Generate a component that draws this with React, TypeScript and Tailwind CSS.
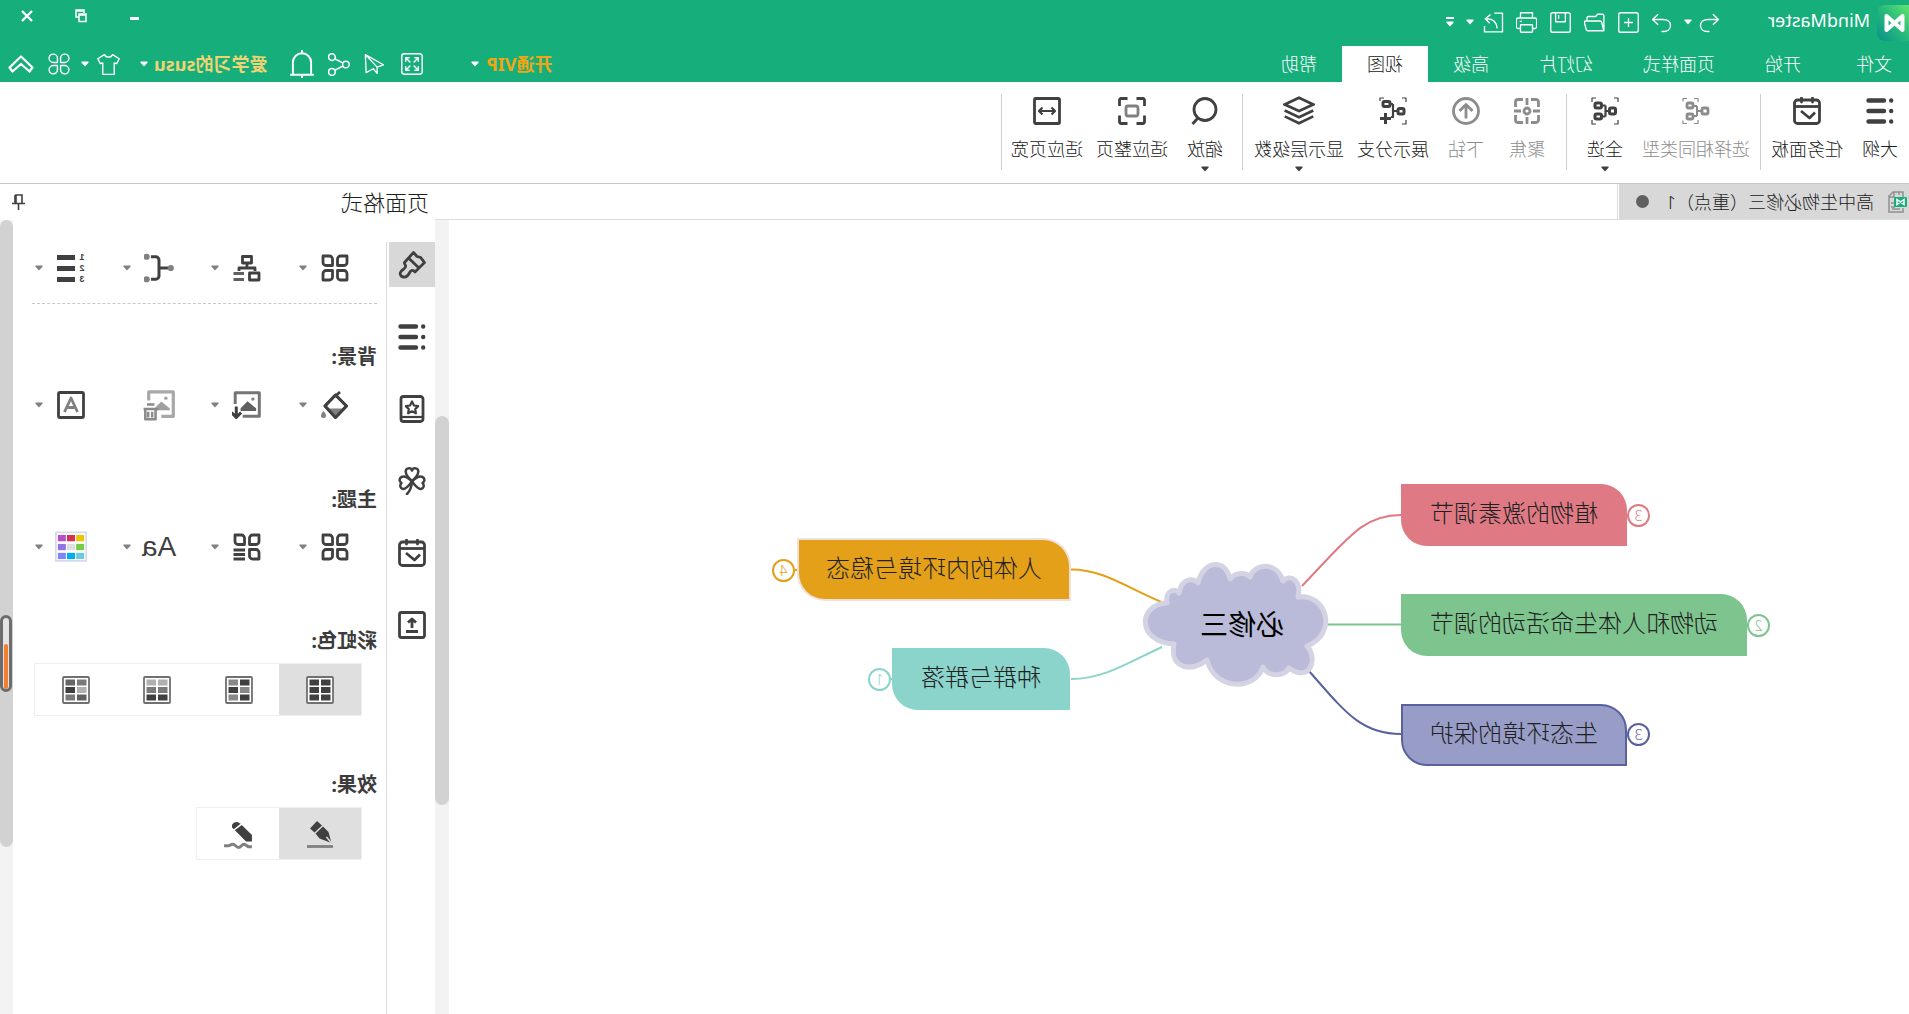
import React, { useState } from "react";

const Caret = ({ className = "text-white" }: { className?: string }) => (
  <svg className={`shrink-0 ${className}`} width="8" height="6" viewBox="0 0 8 6" fill="currentColor">
    <path d="M0.5 0.5h7v1.2L4 5.6 0.5 1.7z" />
  </svg>
);

type IconProps = { size?: number; stroke?: number; children: React.ReactNode };

// All the icons are drawn on a 28 x 28 grid
const Icon = ({ size = 28, stroke = 2.8, children }: IconProps) => (
  <svg
    className="shrink-0"
    width={size}
    height={size}
    viewBox="0 0 28 28"
    fill="none"
    stroke="currentColor"
    strokeWidth={stroke}
    strokeLinejoin="round"
  >
    {children}
  </svg>
);

const OutlineIcon = () => (
  <Icon stroke={4.4}>
    <path d="M10 3.5h15.5M10 14h15.5M10 24.5h15.5" strokeLinecap="round" />
    <path d="M2.8 3.5h.01M2.8 14h.01M2.8 24.5h.01" strokeLinecap="round" />
  </Icon>
);

const TaskIcon = () => (
  <Icon>
    <rect x="1.5" y="3" width="25" height="23.5" rx="3" />
    <path d="M1.5 9.5h25" />
    <path d="M8.5 1v4M19.5 1v4" strokeLinecap="round" />
    <path d="M6 15.5l5.500 5.500 8.500-7" />
  </Icon>
);

const SelectSameIcon = () => (
  <Icon>
    <path d="M12 1.5h4M27 4.5v-3h-4M12 26.5h4M27 23.5v3h-4M12 1v4M12 23v4" strokeWidth="1.2" />
    <rect x="2" y="11" width="6" height="6" rx="1.5" />
    <path d="M8 14h5M13 9v10M13 9h4M13 19h4" strokeWidth="2" />
    <rect x="17" y="6" width="6" height="5" rx="1.5" />
    <rect x="17" y="17" width="6" height="5" rx="1.5" />
  </Icon>
);

const SelectAllIcon = () => (
  <Icon stroke={3}>
    <path d="M1 5V1h4M23 1h4v4M27 23v4h-4M5 27H1v-4" strokeWidth="1.2" />
    <rect x="3.5" y="11" width="6" height="6" rx="1.5" />
    <path d="M9.5 14h4M13.5 8.5v11M13.5 8.5h4M13.5 19.5h4" strokeWidth="2.2" />
    <rect x="17.5" y="6" width="6.5" height="5" rx="1.5" />
    <rect x="17.5" y="17" width="6.5" height="5" rx="1.5" />
  </Icon>
);

const FocusIcon = () => (
  <Icon>
    <path d="M2.5 10V5A2.500 2.500 0 015 2.500h5M18 2.500h5A2.500 2.500 0 0125.500 5v5M25.500 18v5a2.500 2.500 0 01-2.500 2.500h-5M10 25.500H5A2.500 2.500 0 012.500 23v-5" />
    <path d="M14 1v7M14 20v7M1 14h7M20 14h7" />
    <circle cx="14" cy="14" r="3" />
  </Icon>
);

const DrillIcon = () => (
  <Icon>
    <circle cx="14" cy="14" r="12.500" />
    <path d="M14 21.500V8M7.500 14L14 7.500l6.500 6.500" />
  </Icon>
);

const BranchIcon = () => (
  <Icon stroke={3}>
    <path d="M1 5V1h4M23 1h4v3M5 27H1v-4" strokeWidth="1.2" />
    <rect x="3" y="11.500" width="6" height="5.500" rx="1.500" />
    <path d="M9 14h5M14 7v13h2M14 7h3" strokeWidth="2.2" />
    <rect x="17" y="4.500" width="7" height="5" rx="1.500" />
    <path d="M21.500 16v11M16 21.500h11" strokeWidth="3" />
  </Icon>
);

const LayersIcon = () => (
  <Icon size={32} stroke={2.4}>
    <path d="M14 2.500l12.500 5.800L14 14 1.500 8.300z" strokeLinejoin="miter" />
    <path d="M1.500 13.500L14 19.500l12.500-6M1.500 18.700L14 24.700l12.500-6" strokeLinejoin="miter" />
  </Icon>
);

const ZoomIcon = () => (
  <Icon>
    <circle cx="14" cy="12.500" r="11" />
    <path d="M21 21l5.500 6" />
  </Icon>
);

const FitPageIcon = () => (
  <Icon>
    <path d="M1.500 9V3a1.500 1.500 0 011.500-1.500h6.500M18.500 1.500H25A1.500 1.500 0 0126.500 3v6M26.500 18.500V25a1.500 1.500 0 01-1.500 1.500h-6.500M9.500 26.500H3A1.500 1.500 0 011.500 25v-6.500" />
    <rect x="8" y="9" width="12" height="10" rx="2" stroke="#808080" />
  </Icon>
);

const FitWidthIcon = () => (
  <Icon>
    <rect x="1.500" y="1.500" width="25" height="25" rx="1" />
    <path d="M6 14h16M9.500 10.500L6 14l3.500 3.500M18.500 10.500L22 14l-3.500 3.500" strokeWidth="2.200" />
  </Icon>
);

const GridIcon = () => (
  <Icon>
    <path d="M2 2h6.500a3 3 0 013 3v6.500H5a3 3 0 01-3-3z" />
    <path d="M26 2h-6.500a3 3 0 00-3 3v6.500H23a3 3 0 003-3z" />
    <path d="M2 26h6.500a3 3 0 003-3v-6.500H5a3 3 0 00-3 3z" />
    <path d="M26 26h-6.500a3 3 0 01-3-3v-6.500H23a3 3 0 013 3z" />
  </Icon>
);

const GridListIcon = () => (
  <Icon>
    <path d="M2 2h6.500a3 3 0 013 3v6.500H5a3 3 0 01-3-3z" />
    <path d="M26 2h-6.500a3 3 0 00-3 3v6.500H23a3 3 0 003-3z" />
    <path d="M2 26h6.500a3 3 0 003-3v-6.500H5a3 3 0 00-3 3z" />
    <path d="M16 17h11.500M16 21.500h11.500M16 26h11.500" />
  </Icon>
);

const LayoutIcon = () => (
  <Icon>
    <rect x="9.500" y="2.500" width="9" height="6.500" />
    <path d="M14 9v5M6 17v-3h16v3" />
    <rect x="2" y="19" width="9.500" height="7" />
    <path d="M17 19.500h10.500M17 25.500h10.500" stroke="#606060" />
  </Icon>
);

const ConnectorIcon = () => (
  <Icon size={30}>
    <path d="M5 14h9M21.500 3.500H17a3 3 0 00-3 3v15a3 3 0 003 3h4.500" />
    <g fill="#808080" stroke="none">
      <circle cx="3" cy="14" r="2.900" />
      <circle cx="25.500" cy="3.500" r="2.900" />
      <circle cx="25.500" cy="24.500" r="2.900" />
    </g>
  </Icon>
);

const NumberIcon = () => (
  <div className="flex h-8 items-center gap-1">
    <div className="flex flex-col font-['Liberation_Sans',sans-serif] text-[9px] leading-[11px] font-bold">
      <span>1</span>
      <span>2</span>
      <span>3</span>
    </div>
    <div className="flex flex-col gap-[6px]">
      <div className="h-[5px] w-[18px] bg-current" />
      <div className="h-[5px] w-[18px] bg-current" />
      <div className="h-[5px] w-[18px] bg-current" />
    </div>
  </div>
);

const FillIcon = () => (
  <Icon>
    <path d="M9 1l4 3.500M13.500 4L24 15 13.500 26.500 2.500 15z" />
    <path d="M4 17.500h19L13.500 26z" fill="#808080" stroke="none" />
    <path d="M13.500 4L24 15 13.500 26.500 2.500 15z" />
    <path d="M25.500 20c2 2.500 2.500 3.500 2.500 4.500a2.500 2.500 0 01-5 0c0-1 .5-2 2.500-4.500z" fill="#808080" stroke="none" />
  </Icon>
);

const ImageInIcon = () => (
  <Icon size={30}>
    <path d="M18 24.500H2.500v-22H25V13" stroke="#757575" />
    <path d="M5.500 19.500V17l8-6.500 6.500 6.500v2.500z" fill="#606060" stroke="none" />
    <circle cx="8.500" cy="8.500" r="1.600" fill="#808080" stroke="none" />
    <path d="M24 15.500v10M19.500 21l4.500 4.500 4.500-4.500" />
  </Icon>
);

const ImageDeleteIcon = () => (
  <Icon size={32}>
    <path d="M12 24H1.500V2.500H23V10" stroke="#a8a8a8" />
    <path d="M4.500 18.500V17l7.500-6 5 5v2.500z" fill="#a0a0a0" stroke="none" />
    <circle cx="8" cy="8" r="1.500" fill="#a0a0a0" stroke="none" />
    <path d="M14.500 17.500h13M18 13.500h6.500M17 18v8.500h9V18M20 20v5M23.500 20v5" stroke="#8a8a8a" strokeWidth="2.200" />
  </Icon>
);

const WatermarkIcon = () => (
  <Icon>
    <rect x="1.500" y="1.500" width="25" height="25" rx="1.500" />
    <path d="M7.500 21L14 7l6.500 14M10 16.500h8" stroke="#808080" />
  </Icon>
);

const paletteColors = [
  "#ecc400", "#d8304f", "#b94fc8",
  "#74cc48", "#dedede", "#9273e4",
  "#6fc8e0", "#00aef0", "#7a86fa",
];

const PaletteIcon = () => (
  <Icon size={32}>
    <rect x="0.700" y="1.200" width="26.600" height="25" stroke="#d5daea" strokeWidth="1.500" />
    {paletteColors.map((c, i) => (
      <rect
        key={c}
        x={2.5 + (i % 3) * 8}
        y={3.5 + Math.floor(i / 3) * 7.8}
        width="7"
        height="5.500"
        fill={c}
        stroke="none"
      />
    ))}
  </Icon>
);

const RainbowIcon = ({ cells }: { cells: string[] }) => (
  <Icon>
    <rect x="1" y="1" width="26" height="26" rx="1" fill="white" stroke="#707070" strokeWidth="1.800" />
    {cells.map((c, i) => (
      <rect
        key={i}
        x={3.5 + (i % 2) * 11.5}
        y={3.5 + Math.floor(i / 2) * 7.5}
        width="9.500"
        height="6"
        fill={c}
        stroke="none"
      />
    ))}
  </Icon>
);

const PenIcon = () => (
  <Icon>
    <path d="M1 26.500h26" stroke="#808080" strokeWidth="2.800" />
    <path d="M17 1l7 7.500-4.500 4L12 5.500z" fill="currentColor" stroke="none" />
    <path d="M11 6.500l7.500 7-4 5L2.500 23l3-11z" fill="currentColor" stroke="none" />
    <path d="M2.500 23l5-6" stroke="#dfdfdf" strokeWidth="1.500" />
  </Icon>
);

const PencilIcon = () => (
  <Icon size={30}>
    <path d="M1 26h3l4-2.500c3 0 3 3 5.500 3s3-3 5.500-3 2 1.500 4 1.500h4" stroke="#808080" />
    <path d="M12.500 4a4.200 4.200 0 017 4L18 9.500 11.500 4.500z" fill="currentColor" stroke="none" />
    <path d="M10.500 5.500l6.500 5L6.500 21H1v-6z" fill="currentColor" stroke="none" />
  </Icon>
);

const BrushIcon = () => (
  <Icon>
    <path d="M12.500 1.500L9 5.500l-3.500.8-4 5.200L11 21c2-2.500 4-2 5 0 1.500 3 3 5.500 6 5a3.400 3.400 0 003-5.500c-1.500-2.500-5.500-3-4.500-6 .5-1.500 1.500-2 1-3z" />
    <path d="M17.500 7L7 17" />
  </Icon>
);

const StarBookIcon = () => (
  <Icon>
    <rect x="3" y="1.500" width="22" height="25" rx="2.500" />
    <path d="M3 22h22" strokeWidth="2.200" />
    <path d="M14 6.500l2 4 4.200.6-3 3 .7 4.200-3.900-2-3.900 2 .7-4.200-3-3 4.200-.6z" strokeWidth="2.200" />
  </Icon>
);

const CloverIcon = () => (
  <Icon stroke={2.5}>
    <path d="M14 14C10 10.500 7.800 8 7.800 5A3.200 3.200 0 0114 3.500 3.200 3.200 0 0120.200 5c0 3-2.200 5.500-6.200 9z" />
    <path d="M14 14.500C11 18.500 8 22.500 5 22a3.400 3.400 0 01-1.500-6 3.300 3.300 0 010-6C7 8.500 11 11.500 14 14.500z" />
    <path d="M14 14.500c3 4 6 8 9 7.500a3.400 3.400 0 001.500-6 3.300 3.300 0 000-6C21 8.500 17 11.500 14 14.500z" />
    <path d="M14 15c.5 6 2 9 5 12" strokeLinecap="round" />
  </Icon>
);

const ExportIcon = () => (
  <Icon>
    <rect x="1.500" y="1.500" width="25" height="25" rx="2" />
    <path d="M8 20.500h12M14 17V9M10 11.500L14 8l4 3.500" />
  </Icon>
);

const quickTools: { label: string; width: string; icon: React.ReactNode }[] = [
  { label: "撤销", width: "w-6", icon: <path d="M9.500 3L2 10l7.500 7M2 10h14c6 0 10 3 10 8s-4 8-9 8h-3" /> },
  { label: "撤销菜单", width: "w-5", icon: null },
  { label: "恢复", width: "w-8", icon: <path d="M18.500 3L26 10l-7.500 7M26 10H12C6 10 2 13 2 18s4 8 9 8h3" /> },
  {
    label: "新建",
    width: "w-[34px]",
    icon: (
      <>
        <rect x="1" y="1" width="26" height="26" rx="2.500" />
        <path d="M14 8v12M8 14h12" />
      </>
    ),
  },
  {
    label: "打开",
    width: "w-[34px]",
    icon: <path d="M1.500 25V5a2 2 0 012-2H10l2.500 3H22a2 2 0 012 2v4M1.500 25l3-11.500c.3-1 1-1.500 2-1.500H26a1.500 1.500 0 011.500 2L25 23.500c-.3 1-1 1.500-2 1.500z" />,
  },
  {
    label: "保存",
    width: "w-[34px]",
    icon: (
      <>
        <path d="M1 3.500A2.500 2.500 0 013.500 1h21A2.500 2.500 0 0127 3.500v21a2.500 2.500 0 01-2.500 2.500h-21A2.500 2.500 0 011 24.500z" />
        <path d="M7.500 1v12h13V1M16.500 4v5" />
      </>
    ),
  },
  {
    label: "打印",
    width: "w-[34px]",
    icon: (
      <>
        <path d="M6 8V1h16v7M6 22H3a2.500 2.500 0 01-2.500-2.500v-9A2.500 2.500 0 013 8h22a2.500 2.500 0 012.500 2.500v9A2.500 2.500 0 0125 22h-3" />
        <rect x="6" y="17" width="16" height="10" rx="1" />
        <path d="M20 12.500h3" />
      </>
    ),
  },
  { label: "导出", width: "w-8", icon: <path d="M13 1.500H2v25h24v-8M9 22c1-9 5-13 14-13M18 3.500L25 9l-6 6" /> },
];

const tabs = ["文件", "开始", "页面样式", "幻灯片", "高级", "视图", "帮助"];

type Tool = { label: string; icon: React.ReactNode; disabled?: boolean; menu?: boolean };

const toolGroups: { className: string; tools: Tool[] }[] = [
  {
    className: "pr-[5px]",
    tools: [
      { label: "大纲", icon: <OutlineIcon /> },
      { label: "任务面板", icon: <TaskIcon /> },
    ],
  },
  {
    className: "pl-[5px] pr-[9px]",
    tools: [
      { label: "选择相同类型", icon: <SelectSameIcon />, disabled: true },
      { label: "全选", icon: <SelectAllIcon />, menu: true },
    ],
  },
  {
    className: "pl-[10px] pr-[6px]",
    tools: [
      { label: "聚焦", icon: <FocusIcon />, disabled: true },
      { label: "下钻", icon: <DrillIcon />, disabled: true },
      { label: "展示分支", icon: <BranchIcon /> },
      { label: "显示层级数", icon: <LayersIcon />, menu: true },
    ],
  },
  {
    className: "pl-[8px] pr-[4px]",
    tools: [
      { label: "缩放", icon: <ZoomIcon />, menu: true },
      { label: "适应整页", icon: <FitPageIcon /> },
      { label: "适应页宽", icon: <FitWidthIcon /> },
    ],
  },
];

const topics = [
  { text: "植物的激素调节", box: "left-[282px] top-[264px] w-[226px] h-[62px] bg-[#df7a85]" },
  { text: "动物和人体生命活动的调节", box: "left-[162px] top-[374px] w-[346px] h-[62px] bg-[#7ec48e]" },
  { text: "生态环境的保护", box: "left-[282px] top-[484px] w-[226px] h-[62px] bg-[#989dc8] border-2 border-[#5a619f]" },
  { text: "人体的内环境与稳态", box: "left-[840px] top-[320px] w-[270px] h-[59px] bg-[#e3a018] ring-2 ring-[#efe0dc]" },
  { text: "种群与群落", box: "left-[839px] top-[428px] w-[178px] h-[62px] bg-[#8bd4cb]" },
];

const counts = [
  { n: 3, pos: "left-[259px] top-[284px] border-[#df7a85] text-[#df7a85]" },
  { n: 2, pos: "left-[139px] top-[394px] border-[#7ec48e] text-[#7ec48e]" },
  { n: 3, pos: "left-[259px] top-[503px] border-[#5a619f] text-[#5a619f]" },
  { n: 4, pos: "left-[1114px] top-[339px] border-[#e3a018] text-[#e3a018]" },
  { n: 1, pos: "left-[1018px] top-[448px] border-[#8bd4cb] text-[#8bd4cb]" },
];

const sideTools = [
  { label: "页面格式", icon: <BrushIcon /> },
  { label: "大纲面板", icon: <OutlineIcon /> },
  { label: "图标", icon: <StarBookIcon /> },
  { label: "剪贴画", icon: <CloverIcon /> },
  { label: "任务", icon: <TaskIcon /> },
  { label: "导出面板", icon: <ExportIcon /> },
];

const layoutTools = [
  { label: "主题样式", icon: <GridIcon />, menu: true },
  { label: "布局", icon: <LayoutIcon />, menu: true },
  { label: "连接线", icon: <ConnectorIcon />, menu: true },
  { label: "编号", icon: <NumberIcon />, menu: true },
];

const backgroundTools = [
  { label: "填充", icon: <FillIcon />, menu: true },
  { label: "插入图片", icon: <ImageInIcon />, menu: true },
  { label: "移除图片", icon: <ImageDeleteIcon />, menu: false },
  { label: "水印", icon: <WatermarkIcon />, menu: true },
];

const themeTools = [
  { label: "主题", icon: <GridIcon />, menu: true },
  { label: "主题列表", icon: <GridListIcon />, menu: true },
  {
    label: "字体",
    icon: <span className="font-['Liberation_Sans',sans-serif] text-[28px] leading-8 font-medium">Aa</span>,
    menu: true,
  },
  { label: "主题颜色", icon: <PaletteIcon />, menu: true },
];

const rainbows = [
  ["#404040", "#404040", "#404040", "#404040", "#404040", "#404040"],
  ["#404040", "#888888", "#888888", "#404040", "#404040", "#888888"],
  ["#b0b0b0", "#b0b0b0", "#7a7a7a", "#7a7a7a", "#404040", "#404040"],
  ["#7a7a7a", "#666666", "#b0b0b0", "#404040", "#606060", "#7a7a7a"],
];

const ToolRow = ({ tools }: { tools: { label: string; icon: React.ReactNode; menu: boolean }[] }) => (
  <div className="flex pl-[26px]">
    {tools.map((tool) => (
      <button
        key={tool.label}
        aria-label={tool.label}
        className="flex h-8 w-[88px] shrink-0 items-center gap-3 last:w-auto"
      >
        <span className="flex w-8 justify-center">{tool.icon}</span>
        {tool.menu && <Caret className="text-[#808080]" />}
      </button>
    ))}
  </div>
);

const TitleBar = () => (
  <div className="flex h-[46px] items-start">
    <svg className="mt-[5px]" width="32" height="36" viewBox="0 0 32 36">
      <defs>
        <linearGradient id="logo" x1="0" y1="0" x2="1" y2="1">
          <stop offset="0" stopColor="#5fe36f" />
          <stop offset="0.5" stopColor="#25b97c" />
          <stop offset="1" stopColor="#0c8f8c" />
        </linearGradient>
      </defs>
      <path d="M0 0h24a8 8 0 018 8v20a8 8 0 01-8 8H0z" fill="url(#logo)" />
      <path d="M6.500 25V11l16 14V11L6.500 25z" fill="none" stroke="white" strokeWidth="4" strokeLinejoin="round" />
    </svg>
    <span className="ml-[7px] mt-[6px] w-[145px] text-lg leading-7 text-white">MindMaster</span>
    <div className="mt-2 ml-[3px] flex h-7 items-center text-white">
      {quickTools.map((tool) => (
        <button key={tool.label} aria-label={tool.label} className={`flex justify-center ${tool.width}`}>
          {tool.icon ? (
            <Icon size={21} stroke={1.8}>{tool.icon}</Icon>
          ) : (
            <Caret />
          )}
        </button>
      ))}
      <button aria-label="导出菜单" className="flex w-4 justify-center">
        <Caret />
      </button>
      <button aria-label="更多" className="flex w-6 flex-col items-center gap-[2px]">
        <span className="h-[2px] w-2 bg-white" />
        <Caret />
      </button>
    </div>
    <div className="ml-auto flex h-8 items-center text-white">
      <button aria-label="最小化" className="flex w-[54px] justify-center pt-1">
        <span className="h-[3px] w-[9px] bg-white" />
      </button>
      <button aria-label="还原" className="flex w-[54px] justify-center">
        <svg width="12" height="14" viewBox="0 0 12 14" fill="none" stroke="currentColor" strokeWidth="1.500">
          <path d="M3 4V1h8v7H8M3 2h8M1 5h7v7.500H1zM1 6h7" />
        </svg>
      </button>
      <button aria-label="关闭" className="flex w-[54px] justify-center">
        <svg width="12" height="12" viewBox="0 0 12 12" stroke="currentColor" strokeWidth="2.400">
          <path d="M1 1l10 10M11 1L1 11" />
        </svg>
      </button>
    </div>
  </div>
);

const TabBar = ({ active, onSelect }: { active: string; onSelect: (tab: string) => void }) => (
  <div className="flex h-9 items-stretch">
    <nav className="flex">
      {tabs.map((tab) => (
        <button
          key={tab}
          onClick={() => onSelect(tab)}
          className={`px-[25px] text-lg leading-9 font-light first:pr-[30px] first:pl-[17px] ${
            tab === active ? "bg-white text-[#202020]" : "text-white"
          }`}
        >
          {tab}
        </button>
      ))}
    </nav>
    <div className="ml-auto flex items-center text-white">
      <button className="mr-[39px] flex items-center gap-[7px] text-lg font-bold text-[#f0a614]">
        开通VIP
        <Caret />
      </button>
      <button aria-label="全屏" className="flex w-10 justify-center">
        <Icon size={22} stroke={1.8}>
          <rect x="1" y="1" width="26" height="26" rx="3" />
          <path d="M6 11V6h5M17 6h5v5M22 17v5h-5M11 22H6v-5M6 6l6 6M22 6l-6 6M22 22l-6-6M6 22l6-6" />
        </Icon>
      </button>
      <button aria-label="发送" className="flex w-9 justify-center">
        <Icon size={22} stroke={1.7}>
          <path d="M25 2L2 15l8 3v8l5-6 9 5zM25 2L10 18" />
        </Icon>
      </button>
      <button aria-label="分享" className="flex w-9 justify-center">
        <Icon size={23} stroke={1.8}>
          <circle cx="5" cy="14" r="4" />
          <circle cx="22" cy="5" r="4" />
          <circle cx="22" cy="23" r="4" />
          <path d="M9 12l9.500-5M9 16l9.500 5" />
        </Icon>
      </button>
      <button aria-label="通知" className="mr-[17px] flex w-9 justify-center">
        <Icon size={30} stroke={1.8}>
          <path d="M3 24h22M5.500 24V12.500a8.500 8.500 0 0117 0V24M14 1v3M14 24v3" />
        </Icon>
      </button>
      <button className="flex items-center gap-[6px] text-lg font-bold text-[#f0d373]">
        爱学习的susu
        <Caret />
      </button>
      <button aria-label="皮肤" className="ml-5 flex items-center gap-2">
        <Icon size={23} stroke={1.7}>
          <path d="M9 2L1 7l3 6 3-1v14h14V12l3 1 3-6-8-5c-1 2-3 3-5 3S10 4 9 2z" />
        </Icon>
        <Caret />
      </button>
      <button aria-label="应用" className="flex w-11 justify-center">
        <Icon size={22} stroke={1.8}>
          <path d="M12 12H6.500A5.300 5.300 0 1112 6.500zM16 12h5.500A5.300 5.300 0 1016 6.500zM12 16H6.500A5.300 5.300 0 1012 21.500zM16 16h5.500A5.300 5.300 0 1116 21.500z" />
        </Icon>
      </button>
      <button aria-label="收起" className="mr-[5px] flex w-8 justify-center">
        <svg width="26" height="18" viewBox="0 0 26 18" fill="none" stroke="currentColor" strokeWidth="2.200" strokeLinejoin="round">
          <path d="M13 1.500L1.500 12.500l3 4L13 9l8.500 7.500 3-4z" />
        </svg>
      </button>
    </div>
  </div>
);

const Ribbon = () => (
  <div className="flex h-[102px] border-b border-[#c8c8c8] bg-white pt-3">
    {toolGroups.map((group) => (
      <div
        key={group.tools[0].label}
        className={`flex h-[76px] items-start gap-[3px] border-r border-[#cfcfcf] ${group.className}`}
      >
        {group.tools.map((tool) => (
          <button
            key={tool.label}
            disabled={tool.disabled}
            className={`flex flex-col items-center ${tool.label.length === 2 ? "px-[11px]" : "px-[5px]"} ${
              tool.disabled ? "text-[#8c8c8c]" : "text-[#404040]"
            }`}
          >
            <span className="flex h-[34px] items-center">{tool.icon}</span>
            <span className={`mt-[9px] text-lg leading-6 font-light ${tool.disabled ? "" : "text-[#202020]"}`}>
              {tool.label}
            </span>
            {tool.menu && <Caret className="mt-[5px] text-[#404040]" />}
          </button>
        ))}
      </div>
    ))}
  </div>
);

const DocumentBar = () => (
  <div className="flex h-9 border-b border-[#dcdcdc] bg-white">
    <div className="flex items-center bg-[#d8d8d8] pr-[17px] pl-[2px]">
      <svg width="20" height="22" viewBox="0 0 20 22" fill="none" stroke="#909090" strokeWidth="1.500">
        <path d="M4 6V1h10l4 4v16H4v-4M8 1v3M13 1v5h5M12 12h4M12 16h4M7 18h8" />
        <rect x="0" y="6" width="13" height="10" rx="1" fill="#16ae7a" stroke="none" />
        <path d="M3 13.500V8.500l7 5V8.500z" stroke="white" />
      </svg>
      <span className="ml-[13px] text-lg leading-9 font-light text-[#202020]">高中生物必修三（重点）1</span>
      <span className="ml-[17px] h-[13px] w-[13px] rounded-full bg-[#606060]" />
    </div>
    <div className="ml-px w-px bg-[#dcdcdc]" />
  </div>
);

const Canvas = () => (
  <div className="relative min-w-0 flex-1 overflow-hidden bg-white">
    <svg className="absolute top-0 left-0" width="1460" height="794" viewBox="0 0 1460 794" fill="none" strokeWidth="2">
      <path d="M281 295h2M508 295C546 295 560 317 607 366" stroke="#df7a85" />
      <path d="M160 405h2M508 404.500h75" stroke="#7ec48e" />
      <path d="M281 514h2M508 514C548 514 564 492 600 451" stroke="#5a619f" />
      <path d="M1110 350h4M838 349.500C805 349.500 782 368 745 383" stroke="#e3a018" />
      <path d="M1016 459h3M838 459C805 459 782 443 747 427" stroke="#8bd4cb" />
      <path
        d="M742 383C744 371 734 367 730 373C727 357 715 358 711 363C706 340 683 338 679 359C673 352 663 352 659 357C654 342 632 342 626 361C620 354 607 359 611 377C583 373 570 413 602 426C590 440 600 463 620 448C625 457 641 457 646 447C654 471 694 471 702 440C716 452 740 450 735 424C773 422 771 384 742 383Z"
        fill="#babbd9"
        stroke="#d3d3e4"
        strokeWidth="5"
        strokeLinejoin="round"
      />
    </svg>
    <div className="absolute top-[384px] left-[625px] text-[28px] leading-10 text-black">必修三</div>
    {topics.map((topic) => (
      <div
        key={topic.text}
        className={`absolute flex items-center justify-center rounded-tl-[26px] rounded-br-[26px] pb-1 text-2xl font-light text-[#202020] ${topic.box}`}
      >
        {topic.text}
      </div>
    ))}
    {counts.map((count) => (
      <button
        key={count.pos}
        className={`absolute flex h-[23px] w-[23px] items-center justify-center rounded-full border-2 bg-white text-sm font-light ${count.pos}`}
      >
        {count.n}
      </button>
    ))}
  </div>
);

const Heading = ({ children }: { children: React.ReactNode }) => (
  <h2 className="text-xl leading-7 font-bold text-[#3c3c3c]">{children}:</h2>
);

const FormatPanel = () => {
  const [side, setSide] = useState(0);
  const [rainbow, setRainbow] = useState(0);
  const [effect, setEffect] = useState(0);

  return (
    <aside className="flex w-[435px] shrink-0 flex-col bg-white text-[#404040]">
      <header className="flex h-9 items-center justify-between pr-3 pl-[6px]">
        <h1 className="text-[22px] leading-9 font-light text-[#202020]">页面格式</h1>
        <button aria-label="固定">
          <svg width="13" height="16" viewBox="0 0 13 16" fill="none" stroke="#404040" strokeWidth="1.600">
            <path d="M3 9V1h6v8M0 9.500h13M6.500 10v6M9 1v8M10 1v8" />
          </svg>
        </button>
      </header>
      <div className="flex flex-1">
        <div className="mt-[22px] flex w-[49px] shrink-0 flex-col gap-[27px] border-r border-[#dcdcdc]">
          {sideTools.map((tool, i) => (
            <button
              key={tool.label}
              aria-label={tool.label}
              onClick={() => setSide(i)}
              className={`flex h-[45px] w-[46px] items-center justify-center ${side === i ? "bg-[#d8d8d8]" : ""}`}
            >
              {tool.icon}
            </button>
          ))}
        </div>
        <div className="min-w-0 flex-1 pt-8 pr-[19px] pl-[9px]">
          <div className="border-b border-dashed border-[#c8c8c8] pb-[19px]">
            <ToolRow tools={layoutTools} />
          </div>
          <section className="mt-[39px] flex flex-col gap-[18px]">
            <Heading>背景</Heading>
            <ToolRow tools={backgroundTools} />
          </section>
          <section className="mt-[65px] flex flex-col gap-[17px]">
            <Heading>主题</Heading>
            <ToolRow tools={themeTools} />
          </section>
          <section className="mt-16">
            <Heading>彩虹色</Heading>
            <div className="mt-2 ml-[15px] flex w-[328px] border border-[#eeeeee]">
              {rainbows.map((cells, i) => (
                <button
                  key={i}
                  aria-label={`彩虹色 ${i + 1}`}
                  onClick={() => setRainbow(i)}
                  className={`flex h-[51px] flex-1 items-center justify-center ${rainbow === i ? "bg-[#dfdfdf]" : ""}`}
                >
                  <RainbowIcon cells={cells} />
                </button>
              ))}
            </div>
          </section>
          <section className="mt-[55px]">
            <Heading>效果</Heading>
            <div className="mt-2 ml-[15px] flex w-[166px] border border-[#eeeeee]">
              {[<PenIcon />, <PencilIcon />].map((icon, i) => (
                <button
                  key={i}
                  aria-label={i === 0 ? "钢笔" : "手绘"}
                  onClick={() => setEffect(i)}
                  className={`flex h-[51px] flex-1 items-center justify-center ${effect === i ? "bg-[#dfdfdf]" : ""}`}
                >
                  {icon}
                </button>
              ))}
            </div>
          </section>
        </div>
        <div className="relative w-[13px] shrink-0 bg-[#f3f3f3]">
          <div className="h-[79%] rounded-full bg-[#d2d2d2]" />
          <div className="absolute top-[395px] left-px flex h-[77px] w-3 items-end justify-center rounded-full border-[3px] border-[#6c6c6c] bg-[#e4e4e4]">
            <div className="h-[45px] w-1 rounded-full bg-[#f07f2e]" />
          </div>
        </div>
      </div>
    </aside>
  );
};

const App = () => {
  const [activeTab, setActiveTab] = useState("视图");

  return (
    <div className="flex min-h-screen -scale-x-100 flex-col overflow-hidden bg-white font-['Noto_Sans','Noto_Sans_CJK_SC',sans-serif] whitespace-nowrap">
      <header className="bg-[#16ae7a]">
        <TitleBar />
        <TabBar active={activeTab} onSelect={setActiveTab} />
      </header>
      <Ribbon />
      <main className="flex flex-1">
        <div className="flex min-w-0 flex-1 flex-col">
          <DocumentBar />
          <div className="flex flex-1">
            <Canvas />
            <div className="flex w-[14px] flex-col bg-[#f3f3f3]">
              <div className="mt-[196px] h-[389px] rounded-full bg-[#d2d2d2]" />
            </div>
          </div>
        </div>
        <FormatPanel />
      </main>
    </div>
  );
};

export default App;
